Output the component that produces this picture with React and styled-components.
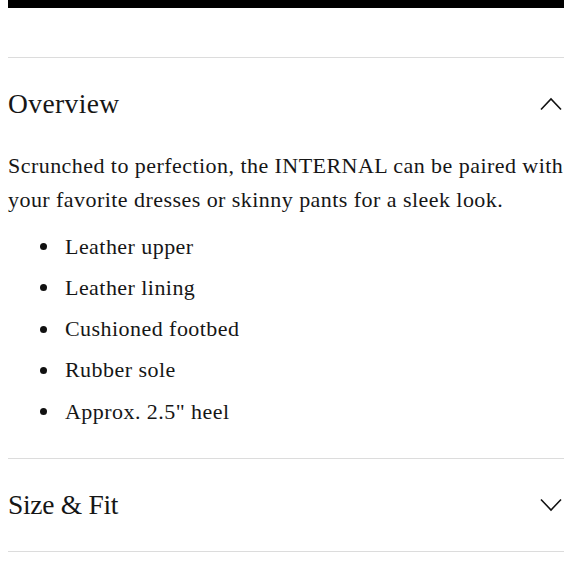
import React from "react";
import styled, { createGlobalStyle } from "styled-components";

const Global = createGlobalStyle`
  html, body { margin: 0; padding: 0; background: #fff; }
  body { font-family: "Liberation Serif", "DejaVu Serif", serif; color: #161616; }
`;

const Page = styled.div`
  padding: 0 16px 0 8px;
`;

const TopBar = styled.div`
  height: 8px;
  background: #000;
  margin-bottom: 49px;
`;

const Section = styled.section`
  border-top: 1px solid #dcdcdc;
  &:last-child { border-bottom: 1px solid #dcdcdc; }
`;

const Header = styled.div`
  height: 92px;
  display: flex;
  align-items: center;
  justify-content: space-between;
`;

const Title = styled.h2`
  margin: 0;
  font-weight: 400;
  font-size: 27.5px;
  letter-spacing: ${(p) => (p.$tight ? "-0.3px" : "0.4px")};
`;

const Body = styled.div`
  padding-bottom: 26px;
  margin-top: -1px;
`;

const Para = styled.p`
  margin: 0;
  font-size: 22px;
  letter-spacing: 0.45px;
  line-height: 34px;
`;

const List = styled.ul`
  list-style: none;
  margin: 9px 0 0;
  padding: 0;
`;

const Item = styled.li`
  display: flex;
  align-items: center;
  height: 41.25px;
  font-size: 22px;
  letter-spacing: 0.45px;
  &::before {
    content: "";
    width: 7px;
    height: 7px;
    border-radius: 50%;
    background: #111;
    margin: 0 18px 0 32px;
    flex: none;
  }
`;

const Chevron = ({ up }) => (
  <svg width="24" height="14" viewBox="0 0 24 14" style={{ marginRight: 1 }}>
    <path
      d={up ? "M2 12.5 L12 2 L22 12.5" : "M2 1.5 L12 12 L22 1.5"}
      fill="none"
      stroke="#111"
      strokeWidth="1.6"
    />
  </svg>
);

export default function App() {
  return (
    <Page>
      <Global />
      <TopBar />
      <Section>
        <Header>
          <Title>Overview</Title>
          <Chevron up />
        </Header>
        <Body>
          <Para>
            Scrunched to perfection, the INTERNAL can be paired with your favorite dresses or skinny pants for a sleek look.
          </Para>
          <List>
            <Item>Leather upper</Item>
            <Item>Leather lining</Item>
            <Item>Cushioned footbed</Item>
            <Item>Rubber sole</Item>
            <Item>Approx. 2.5" heel</Item>
          </List>
        </Body>
      </Section>
      <Section>
        <Header>
          <Title $tight>Size &amp; Fit</Title>
          <Chevron />
        </Header>
      </Section>
    </Page>
  );
}
